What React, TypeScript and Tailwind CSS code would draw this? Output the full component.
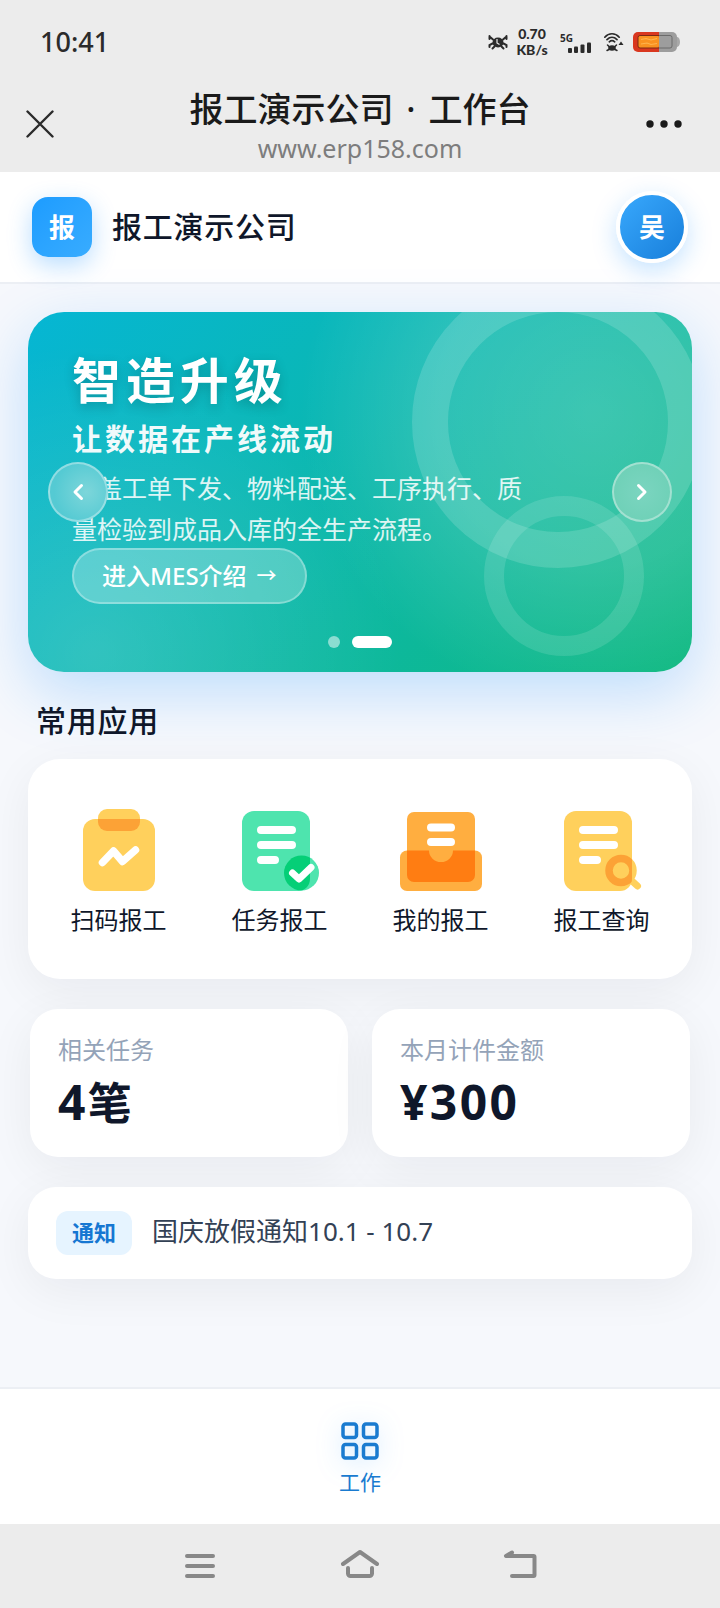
import React, { useState } from 'react';

interface AppEntry {
    key: string;
    label: string;
    icon: React.ReactNode;
}

const ScanIcon = () => (
    <svg viewBox="1 0 96 96" className="size-24" aria-hidden="true">
        <clipPath id="clip-board">
            <rect x="13" y="20" width="72" height="72" rx="12" />
        </clipPath>
        <rect x="28" y="10" width="42" height="22" rx="9" fill="#ffd05c" />
        <rect x="13" y="20" width="72" height="72" rx="12" fill="#ffd05c" />
        <rect x="28" y="10" width="42" height="22" rx="9" fill="#fca236" clipPath="url(#clip-board)" />
        <path d="M32.5 63.5 43.5 52 52.5 62.5 65.5 51" fill="none" stroke="#fff" strokeWidth="7.5" strokeLinecap="round" strokeLinejoin="round" />
    </svg>
);

const TaskIcon = () => (
    <svg viewBox="0 0 96 96" className="size-24" aria-hidden="true">
        <clipPath id="clip-task">
            <rect x="10" y="12" width="68" height="80" rx="12" />
        </clipPath>
        <rect x="10" y="12" width="68" height="80" rx="12" fill="#4ee4ae" />
        <path d="M29 31h31M29 46h31M29 61h14" stroke="#fff" strokeWidth="8" strokeLinecap="round" />
        <circle cx="69.5" cy="74" r="17.5" fill="#4ee4ae" />
        <circle cx="69.5" cy="74" r="17.5" fill="#05cf77" clipPath="url(#clip-task)" />
        <path d="m60.5 74 6.5 6 12-11.5" fill="none" stroke="#fff" strokeWidth="7" strokeLinecap="round" strokeLinejoin="round" />
    </svg>
);

const MineIcon = () => (
    <svg viewBox="1 0 96 96" className="size-24" aria-hidden="true">
        <rect x="8" y="51.5" width="82" height="40.5" rx="7" fill="#ffae40" />
        <rect x="15" y="13" width="68" height="70" rx="7" fill="#ffae40" />
        <path d="M15 51.5h22a12 11.5 0 0 0 24 0h22V76a7 7 0 0 1-7 7H22a7 7 0 0 1-7-7z" fill="#ff7d12" />
        <path d="M39 28.5h20M39 43h20" stroke="#fff" strokeWidth="8" strokeLinecap="round" />
    </svg>
);

const QueryIcon = () => (
    <svg viewBox="0 0 96 96" className="size-24" aria-hidden="true">
        <clipPath id="clip-query">
            <rect x="10" y="12" width="68" height="80" rx="12" />
        </clipPath>
        <rect x="10" y="12" width="68" height="80" rx="12" fill="#ffd05c" />
        <path d="M29 31h31M29 46h31M29 61h14" stroke="#fff" strokeWidth="8" strokeLinecap="round" />
        <circle cx="67" cy="71.5" r="12" fill="none" stroke="#ffd05c" strokeWidth="7.5" />
        <path d="m78 82 5.5 5" stroke="#ffd05c" strokeWidth="7" strokeLinecap="round" />
        <circle cx="67" cy="71.5" r="12" fill="none" stroke="#fca236" strokeWidth="7.5" clipPath="url(#clip-query)" />
    </svg>
);

const apps: AppEntry[] = [
    { key: 'scan', label: '扫码报工', icon: <ScanIcon /> },
    { key: 'task', label: '任务报工', icon: <TaskIcon /> },
    { key: 'mine', label: '我的报工', icon: <MineIcon /> },
    { key: 'query', label: '报工查询', icon: <QueryIcon /> },
];

const stats = [
    { label: '相关任务', value: '4', unit: '笔' },
    { label: '本月计件金额', value: '¥300', unit: '' },
];

const StatusBar = () => (
    <div className="flex h-21 items-center justify-between px-10 text-[#2b2b2b]">
        <span className="text-[27px] font-medium">10:41</span>
        <div className="flex items-center">
            <svg viewBox="0 0 20 16" className="h-4 w-5" fill="none" stroke="currentColor" aria-hidden="true">
                <ellipse cx="10" cy="8.5" rx="5.5" ry="5" fill="currentColor" stroke="none" />
                <path d="M1.500 2.500 5 5.500M18.500 2.500 15 5.500M1.500 2v3M18.500 2v3M4.500 9.500 1.500 11v2M15.500 9.500l3 1.500v2M6.500 12.500l-2 2M13.500 12.500l2 2" strokeWidth="2" strokeLinecap="round" />
                <path d="M9 5v4l2.500 1.500" stroke="#ececec" strokeWidth="1.2" />
            </svg>
            <span className="ml-2 w-8 text-center font-['Lato',sans-serif] text-[14px] leading-[16px] font-black">
                0.70
                <br />
                KB/s
            </span>
            <div className="ml-3 flex flex-col">
                <span className="text-[10px] leading-[12px] font-bold">5G</span>
                <svg viewBox="0 0 24 11" className="-mt-0.5 ml-2 h-[11px] w-6" fill="currentColor" aria-hidden="true">
                    <rect x="0" y="6" width="4" height="5" rx="1" />
                    <rect x="6" y="4.5" width="4" height="6.5" rx="1" />
                    <rect x="12.5" y="2.5" width="4" height="8.5" rx="1" />
                    <rect x="19" y="0.5" width="4" height="10.5" rx="1" />
                </svg>
            </div>
            <svg viewBox="0 0 20 20" className="ml-3 size-5" fill="none" stroke="currentColor" aria-hidden="true">
                <path d="M.8 5.200c4-4.600 10.400-4.600 14.400 0M3 7.600c3-3 7-3 10 0M5.300 9.800c1.700-1.500 3.700-1.500 5.400 0" strokeWidth="1.7" strokeLinecap="round" />
                <ellipse cx="8" cy="16" rx="3.800" ry="2.800" fill="currentColor" stroke="none" />
                <path d="M3.500 13 5 14.500M12.500 13 11 14.500M3 18.500l2-1M13 18.500l-2-1" strokeWidth="1.5" strokeLinecap="round" />
                <path d="M14.500 13h5L17 9.500z" fill="currentColor" stroke="none" />
            </svg>
            <svg viewBox="0 0 48 20" className="ml-2 h-5 w-12" aria-hidden="true">
                <path d="M6 0h21v20H6a5 5 0 0 1-5-5V5a5 5 0 0 1 5-5z" fill="#d9371f" />
                <path d="M27 0h13a5 5 0 0 1 5 5v10a5 5 0 0 1-5 5H27z" fill="#9d9d9d" />
                <path d="M45 5a3 5 0 0 1 0 10z" fill="#a8a8a8" />
                <rect x="6" y="3.5" width="21" height="12.5" rx="2" fill="#f99220" />
                <path d="M27 3.500H8a2 2 0 0 0-2 2V14a2 2 0 0 0 2 2h19" fill="none" stroke="#7c2a12" strokeWidth="1" />
                <path d="M27 3.500h11a2 2 0 0 1 2 2V14a2 2 0 0 1-2 2H27" fill="none" stroke="#6b6b6b" strokeWidth="1" />
                <path d="M9 7.500l5-1 5 1.500 6-1.500M9 12l6-1 4 1.500 6-1" fill="none" stroke="#fdb44e" strokeWidth="1.2" />
            </svg>
        </div>
    </div>
);

const TitleBar = () => (
    <div className="flex h-22 items-center justify-between px-6">
        <button type="button" aria-label="关闭" className="flex w-14 items-center pb-2 pl-0.5">
            <svg viewBox="0 0 28 28" className="size-7" fill="none" stroke="#2b2b2b" strokeWidth="2.4" strokeLinecap="round" aria-hidden="true">
                <path d="M1.500 1.500l25 25M26.500 1.500l-25 25" />
            </svg>
        </button>
        <div className="flex flex-col items-center pb-1">
            <span className="text-[34px] leading-[44px] font-medium text-[#1a1a1a]">
                报工演示公司<span className="mx-1"> · </span>工作台
            </span>
            <span className="text-[25px] leading-[35px] text-[#7d7d7d]">www.erp158.com</span>
        </div>
        <button type="button" aria-label="更多" className="flex w-14 justify-end pr-3 pb-2">
            <svg viewBox="0 0 40 8" className="h-2 w-10" fill="#1a1a1a" aria-hidden="true">
                <circle cx="6" cy="4" r="3.7" />
                <circle cx="20" cy="4" r="3.7" />
                <circle cx="34" cy="4" r="3.7" />
            </svg>
        </button>
    </div>
);

const Banner = () => {
    const [active, setActive] = useState(1);

    return (
        <section className="relative h-90 overflow-hidden rounded-[36px] bg-[radial-gradient(circle_at_10%_95%,rgba(255,255,255,0.16)_0%,transparent_45%),radial-gradient(circle_at_85%_28%,rgba(255,255,255,0.2)_0%,rgba(255,255,255,0.14)_25%,transparent_47%),linear-gradient(135deg,#06b6d4_0%,#10b981_100%)] px-11 pt-10 text-white">
            <div className="absolute -top-9 -right-3 size-[292px] rounded-full border-[36px] border-white/15"></div>
            <div className="absolute right-12 bottom-4 size-40 rounded-full border-[20px] border-white/12"></div>

            <div className="relative">
                <h1 className="text-[49px] leading-[56px] font-bold tracking-widest text-shadow-[0_4px_12px_rgba(0,0,0,0.2)]">智造升级</h1>
                <p className="mt-2.5 text-[30px] leading-[42px] font-bold tracking-widest text-white/95">让数据在产线流动</p>
                <p className="mt-2 w-4/5 text-[25px] leading-[41px] text-white/85">
                    涵盖工单下发、物料配送、工序执行、质量检验到成品入库的全生产流程。
                </p>
                <a href="#mes" className="-mt-0.5 flex h-14 w-fit items-center gap-2.5 rounded-full border-2 border-white/30 bg-white/25 px-7 text-[24px] font-medium">
                    进入MES介绍
                    <span className="text-[20px]">→</span>
                </a>
            </div>

            <button
                type="button"
                aria-label="上一张"
                onClick={() => setActive(active === 0 ? 1 : 0)}
                className="absolute top-[150px] left-5 flex size-15 items-center justify-center rounded-full border-2 border-white/35 bg-[radial-gradient(circle_at_65%_50%,#7dd6da_0%,#55cad3_70%)]"
            >
                <svg viewBox="0 0 12 18" className="h-[18px] w-3" fill="none" stroke="currentColor" strokeWidth="3" strokeLinecap="round" strokeLinejoin="round" aria-hidden="true">
                    <path d="M9.500 2.500 3 9l6.500 6.500" />
                </svg>
            </button>
            <button
                type="button"
                aria-label="下一张"
                onClick={() => setActive(active === 0 ? 1 : 0)}
                className="absolute top-[150px] right-5 flex size-15 items-center justify-center rounded-full border-2 border-white/35 bg-[radial-gradient(circle_at_50%_50%,#7bd5c0_0%,#70d1b8_70%)]"
            >
                <svg viewBox="0 0 12 18" className="h-[18px] w-3" fill="none" stroke="currentColor" strokeWidth="3" strokeLinecap="round" strokeLinejoin="round" aria-hidden="true">
                    <path d="M2.500 2.500 9 9l-6.500 6.500" />
                </svg>
            </button>

            <div className="absolute inset-x-0 bottom-6 flex justify-center gap-3">
                {[0, 1].map((i) => (
                    <button
                        key={i}
                        type="button"
                        aria-label={`第${i + 1}张`}
                        onClick={() => setActive(i)}
                        className={i === active ? 'h-3 w-10 rounded-full bg-white' : 'size-3 rounded-full bg-white/50'}
                    ></button>
                ))}
            </div>
        </section>
    );
};

const App: React.FC = () => {
    return (
        <div className="flex min-h-screen flex-col bg-[#f6f8fc] font-['Noto_Sans','Noto_Sans_CJK_SC',sans-serif]">
            <div className="bg-[#ececec]">
                <StatusBar />
                <TitleBar />
            </div>

            <header className="flex items-center justify-between border-b-2 border-[#eceff4] bg-white px-8 py-[19px]">
                <div className="flex items-center gap-5">
                    <div className="flex size-15 items-center justify-center rounded-2xl bg-linear-135 from-[#1c9cff] to-[#38acff] text-[26px] font-bold text-white shadow-[0_8px_24px_rgba(24,144,255,0.3)]">
                        报
                    </div>
                    <span className="text-[30px] leading-[44px] font-medium tracking-wide text-[#0f172a]">报工演示公司</span>
                </div>
                <button
                    type="button"
                    className="flex size-18 items-center justify-center rounded-full border-4 border-white bg-linear-135 from-[#3aabff] to-[#157cd8] bg-origin-border text-[26px] font-bold text-white shadow-[0_8px_24px_rgba(24,144,255,0.25)]"
                >
                    吴
                </button>
            </header>

            <main className="flex flex-1 flex-col px-7 pt-7 pb-12">
                <div className="rounded-[36px] shadow-[0_20px_60px_rgba(24,144,255,0.25)]">
                    <Banner />
                </div>

                <h2 className="mt-7 pl-2 text-[30px] leading-[41px] font-medium tracking-wide text-[#0f172a]">常用应用</h2>
                <nav className="mt-[18px] grid grid-cols-4 rounded-[32px] bg-white px-2.5 pt-10 pb-[42px] shadow-[0_12px_48px_rgba(15,23,42,0.06)]">
                    {apps.map((app) => (
                        <a key={app.key} href={`#${app.key}`} className="flex flex-col items-center gap-2 text-[24px] leading-[34px] text-[#0f172a]">
                            {app.icon}
                            {app.label}
                        </a>
                    ))}
                </nav>

                <div className="mt-[30px] grid grid-cols-2 gap-6 px-0.5">
                    {stats.map((item) => (
                        <div key={item.label} className="rounded-[28px] bg-white px-7 pt-6 pb-7 shadow-[0_12px_48px_rgba(15,23,42,0.06)]">
                            <p className="text-[24px] leading-[34px] text-[#94a3b8]">{item.label}</p>
                            <p className="mt-2 text-[48px] leading-[54px] font-bold tracking-wider text-[#0f172a]">
                                {item.value}
                                {item.unit && <span className="text-[44px] leading-none">{item.unit}</span>}
                            </p>
                        </div>
                    ))}
                </div>

                <a href="#notice" className="mt-[30px] flex items-center gap-5 rounded-[28px] bg-white px-7 py-6 shadow-[0_12px_48px_rgba(15,23,42,0.06)]">
                    <span className="flex h-11 items-center rounded-xl bg-[#e6f4ff] px-4 pb-0.5 text-[22px] font-bold text-[#1677d2]">通知</span>
                    <span className="pb-1 text-[26px] leading-[40px] text-[#334155]">国庆放假通知10.1 - 10.7</span>
                </a>
            </main>

            <footer className="flex justify-center border-t-2 border-[#eceff4] bg-white pt-8 pb-[27px]">
                <a href="#work" className="flex flex-col items-center gap-1.5 text-[21px] leading-[30px] text-[#1a7bd0]">
                    <svg viewBox="0 0 40 40" className="size-10 drop-shadow-[0_4px_12px_rgba(24,144,255,0.25)]" fill="none" stroke="currentColor" strokeWidth="3.5" aria-hidden="true">
                        <rect x="3" y="3" width="13.5" height="13.5" rx="2.5" />
                        <rect x="23.5" y="3" width="13.5" height="13.5" rx="2.5" />
                        <rect x="3" y="23.5" width="13.5" height="13.5" rx="2.5" />
                        <rect x="23.5" y="23.5" width="13.5" height="13.5" rx="2.5" />
                    </svg>
                    工作
                </a>
            </footer>

            <div className="flex h-21 items-center justify-center gap-30 bg-[#ececec] text-[#888]">
                <button type="button" aria-label="最近任务">
                    <svg viewBox="0 0 40 32" className="h-8 w-10" fill="none" stroke="currentColor" strokeWidth="4" strokeLinecap="round" aria-hidden="true">
                        <path d="M7 6h26M7 16h26M7 26h26" />
                    </svg>
                </button>
                <button type="button" aria-label="主屏幕">
                    <svg viewBox="0 0 40 32" className="h-8 w-10" fill="none" stroke="currentColor" strokeWidth="4" strokeLinecap="round" strokeLinejoin="round" aria-hidden="true">
                        <path d="M3 14 20 2 37 14M8 18v5.500a2.500 2.500 0 0 0 2.500 2.500h19a2.500 2.500 0 0 0 2.500-2.500V18" />
                    </svg>
                </button>
                <button type="button" aria-label="返回">
                    <svg viewBox="0 0 40 32" className="h-8 w-10" fill="none" stroke="currentColor" strokeWidth="4" strokeLinecap="round" strokeLinejoin="round" aria-hidden="true">
                        <path d="M12 2.500 6 6h27.500a1 1 0 0 1 1 1v18a1 1 0 0 1-1 1H12" />
                    </svg>
                </button>
            </div>
        </div>
    );
};

export default App;
